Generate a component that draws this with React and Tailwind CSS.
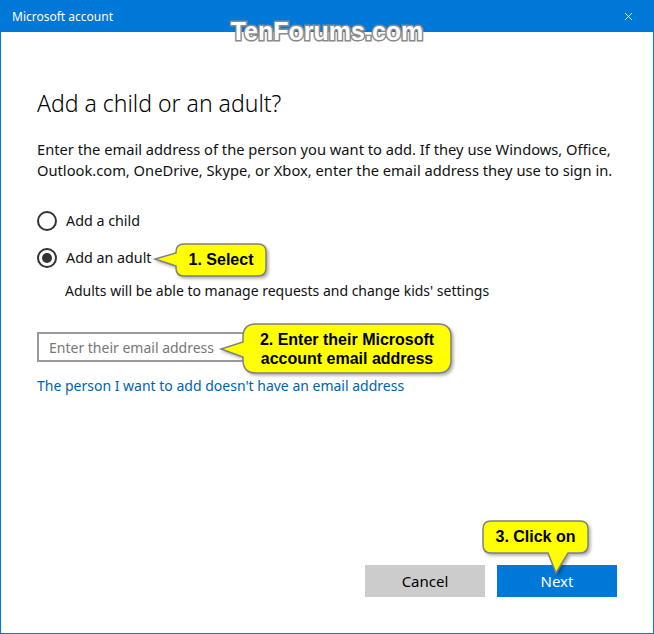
import { X } from 'lucide-react';

function Radio({ checked, label }) {
  return (
    <label className="flex items-center gap-[9px] h-[24px]">
      <span className="w-[20px] h-[20px] rounded-full border-2 border-[#333] flex items-center justify-center">
        {checked && <span className="w-[10px] h-[10px] rounded-full bg-[#333]" />}
      </span>
      <span>{label}</span>
    </label>
  );
}

function Callouts() {
  return (
    <>
      <svg className="absolute inset-0 pointer-events-none [filter:drop-shadow(2px_2px_1.5px_rgba(0,0,0,0.3))]" width="654" height="634">
        <path
          d="M183 243 H257 Q265 243 265 251 V267 Q265 275 257 275 H183 Q175 275 175 267 V265 L154 258 L175 252 V251 Q175 243 183 243 Z"
          fill="#ffff00" stroke="#808080" strokeWidth="1.5"
        />
        <path
          d="M255 323 H437 Q450 323 450 336 V359 Q450 372 437 372 H255 Q242 372 242 359 V356 L220 348 L242 341 V336 Q242 323 255 323 Z"
          fill="#ffff00" stroke="#808080" strokeWidth="1.5"
        />
        <path
          d="M490 520 H579 Q587 520 587 528 V544 Q587 552 579 552 H567 L555 572 L547 552 H490 Q482 552 482 544 V528 Q482 520 490 520 Z"
          fill="#ffff00" stroke="#808080" strokeWidth="1.5"
        />
      </svg>
      <div className="absolute left-[175px] top-[243px] w-[90px] h-[32px] flex items-center justify-center font-bold text-[16px] text-black">
        1. Select
      </div>
      <div className="absolute left-[242px] top-[323px] w-[208px] h-[49px] flex flex-col items-center justify-center font-bold text-[16px] leading-[19px] text-black">
        <span>2. Enter their Microsoft</span>
        <span>account email address</span>
      </div>
      <div className="absolute left-[482px] top-[520px] w-[105px] h-[32px] flex items-center justify-center font-bold text-[16px] text-black">
        3. Click on
      </div>
    </>
  );
}

export default function App() {
  return (
    <div className="relative w-[654px] h-[634px] bg-white border border-[#0078d7] flex flex-col overflow-hidden font-['Liberation_Sans',Arial,sans-serif]">
      {/* Title bar */}
      <div className="h-[31px] bg-[#0078d7] flex items-center justify-between pl-[11px] pr-[18px] text-white">
        <span className="text-[12px] font-['Noto_Sans',sans-serif]">Microsoft account</span>
        <X className="w-[13px] h-[13px]" strokeWidth={1.5} />
      </div>

      {/* Watermark */}
      <div className="absolute left-0 right-0 top-[16px] flex justify-center pointer-events-none">
        <span className="text-[25px] leading-[28px] font-bold text-white [-webkit-text-stroke:3px_#8a8a8a] [paint-order:stroke_fill]">
          TenForums.com
        </span>
      </div>

      {/* Body */}
      <div className="flex-1 flex flex-col px-[36px] pb-[36px] text-[#111] font-['Noto_Sans',sans-serif]">
        <h1 className="mt-[55px] text-[23px] leading-[32px] font-light text-black">Add a child or an adult?</h1>
        <p className="mt-[20px] text-[14.7px] leading-[21px]">
          Enter the email address of the person you want to add. If they use Windows, Office,
          <br />
          Outlook.com, OneDrive, Skype, or Xbox, enter the email address they use to sign in.
        </p>
        <div className="mt-[28px] flex flex-col gap-[13px] text-[14.3px]">
          <Radio label="Add a child" />
          <Radio checked label="Add an adult" />
        </div>
        <p className="mt-[11px] pl-[28px] text-[14px] leading-[20px]">
          Adults will be able to manage requests and change kids&apos; settings
        </p>
        <input
          type="text"
          placeholder="Enter their email address"
          className="mt-[31px] w-[296px] h-[30px] border-2 border-[#999] px-[10px] text-[14px] outline-none placeholder:text-[#777]"
        />
        <a className="mt-[14px] text-[14px] leading-[20px] text-[#0063b1] self-start">
          The person I want to add doesn&apos;t have an email address
        </a>
        <div className="mt-auto flex justify-end gap-[12px]">
          <button className="w-[120px] h-[32px] bg-[#cccccc] text-[15px] text-black">Cancel</button>
          <button className="w-[120px] h-[32px] bg-[#0078d7] text-[15px] text-white">Next</button>
        </div>
      </div>

      <Callouts />
    </div>
  );
}
